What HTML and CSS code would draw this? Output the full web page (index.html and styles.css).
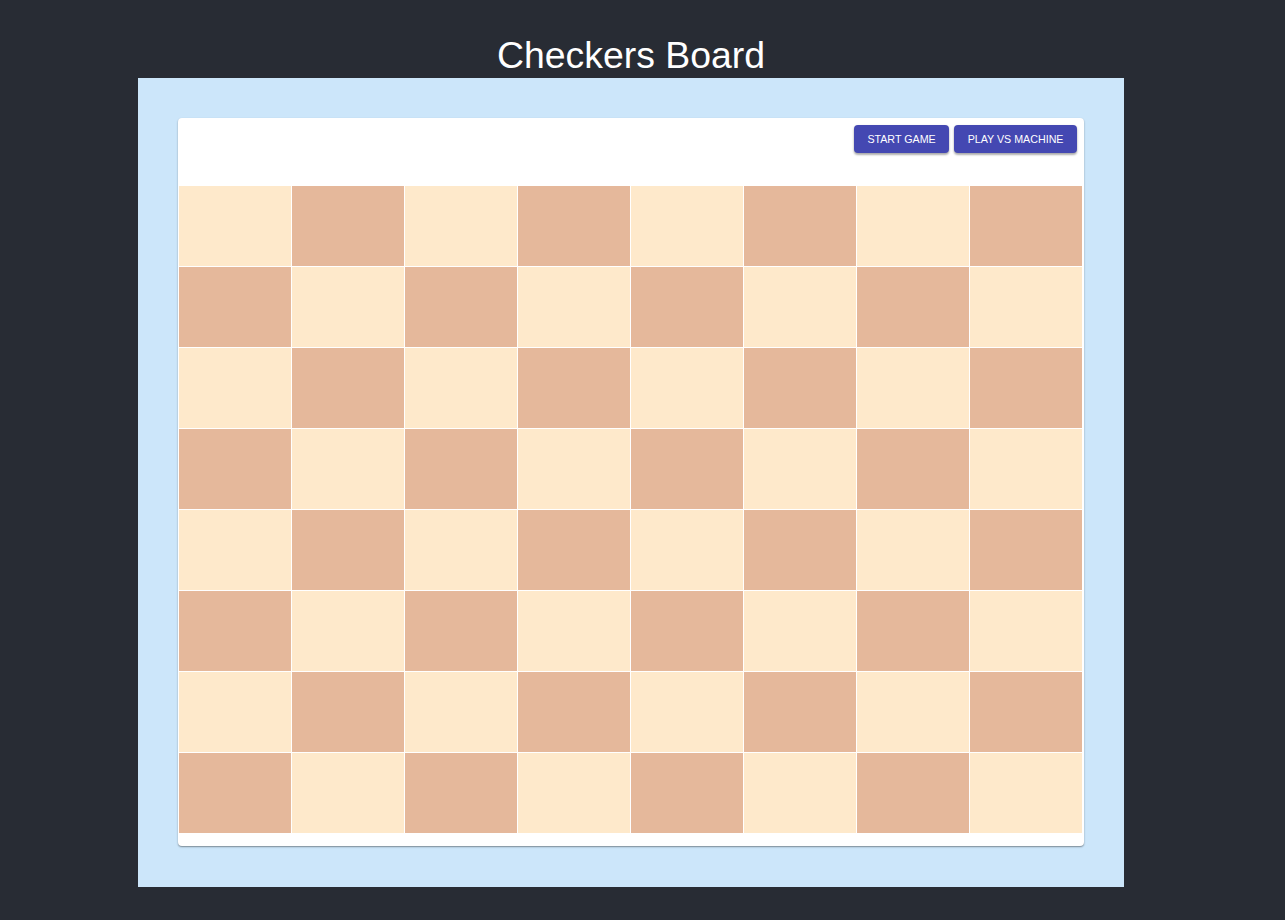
FILE: index.html
```html
<!DOCTYPE html>
<html lang="en">
<head>
<meta charset="utf-8">
<title>Checkers Board</title>
<link rel="stylesheet" href="styles.css">
</head>
<body>
<div class="app">
  <h1 class="title">Checkers Board</h1>
  <div class="panel">
    <div class="card">
      <div class="toolbar">
        <button class="btn">START GAME</button>
        <button class="btn">PLAY VS MACHINE</button>
      </div>
      <div class="board" id="board">
        <div class="cell light"></div><div class="cell dark"></div><div class="cell light"></div><div class="cell dark"></div><div class="cell light"></div><div class="cell dark"></div><div class="cell light"></div><div class="cell dark"></div>
        <div class="cell dark"></div><div class="cell light"></div><div class="cell dark"></div><div class="cell light"></div><div class="cell dark"></div><div class="cell light"></div><div class="cell dark"></div><div class="cell light"></div>
        <div class="cell light"></div><div class="cell dark"></div><div class="cell light"></div><div class="cell dark"></div><div class="cell light"></div><div class="cell dark"></div><div class="cell light"></div><div class="cell dark"></div>
        <div class="cell dark"></div><div class="cell light"></div><div class="cell dark"></div><div class="cell light"></div><div class="cell dark"></div><div class="cell light"></div><div class="cell dark"></div><div class="cell light"></div>
        <div class="cell light"></div><div class="cell dark"></div><div class="cell light"></div><div class="cell dark"></div><div class="cell light"></div><div class="cell dark"></div><div class="cell light"></div><div class="cell dark"></div>
        <div class="cell dark"></div><div class="cell light"></div><div class="cell dark"></div><div class="cell light"></div><div class="cell dark"></div><div class="cell light"></div><div class="cell dark"></div><div class="cell light"></div>
        <div class="cell light"></div><div class="cell dark"></div><div class="cell light"></div><div class="cell dark"></div><div class="cell light"></div><div class="cell dark"></div><div class="cell light"></div><div class="cell dark"></div>
        <div class="cell dark"></div><div class="cell light"></div><div class="cell dark"></div><div class="cell light"></div><div class="cell dark"></div><div class="cell light"></div><div class="cell dark"></div><div class="cell light"></div>
      </div>
    </div>
  </div>
</div>
</body>
</html>
```

FILE: styles.css
```css
html, body {
  margin: 0;
  padding: 0;
  background: #282c34;
  min-height: 100%;
}
body {
  font-family: "Liberation Sans", Arial, sans-serif;
}
.app {
  width: 986px;
  margin-left: 138px;
  padding-top: 33px;
}
.title {
  margin: 0 0 1px;
  font-size: 37.4px;
  line-height: 44px;
  font-weight: 400;
  color: #ffffff;
  text-align: center;
}
.panel {
  background: #cce6fa;
  padding: 40px 40px 41px;
}
.card {
  background: #ffffff;
  border-radius: 4px;
  box-shadow: 0 1px 2px rgba(0, 0, 0, 0.3), 0 1px 1px rgba(0, 0, 0, 0.14);
  padding: 0 0 13px;
}
.toolbar {
  display: flex;
  justify-content: flex-end;
  gap: 5px;
  padding: 7px 7px 0;
  height: 61px;
  box-sizing: content-box;
}
.btn {
  height: 28px;
  padding: 0 13.5px;
  border: 0;
  border-radius: 4px;
  background: #4448b2;
  color: #ffffff;
  font-family: "Liberation Sans", Arial, sans-serif;
  font-size: 10.7px;
  letter-spacing: 0;
  box-shadow: 0 2px 2px rgba(0, 0, 0, 0.25), 0 1px 3px rgba(0, 0, 0, 0.15);
  cursor: pointer;
}
.board {
  display: grid;
  grid-template-columns: repeat(8, 112px);
  grid-auto-rows: 80px;
  gap: 1px;
  padding: 0 1px;
}
.light {
  background: #fee9cb;
}
.dark {
  background: #e5b89b;
}
```
